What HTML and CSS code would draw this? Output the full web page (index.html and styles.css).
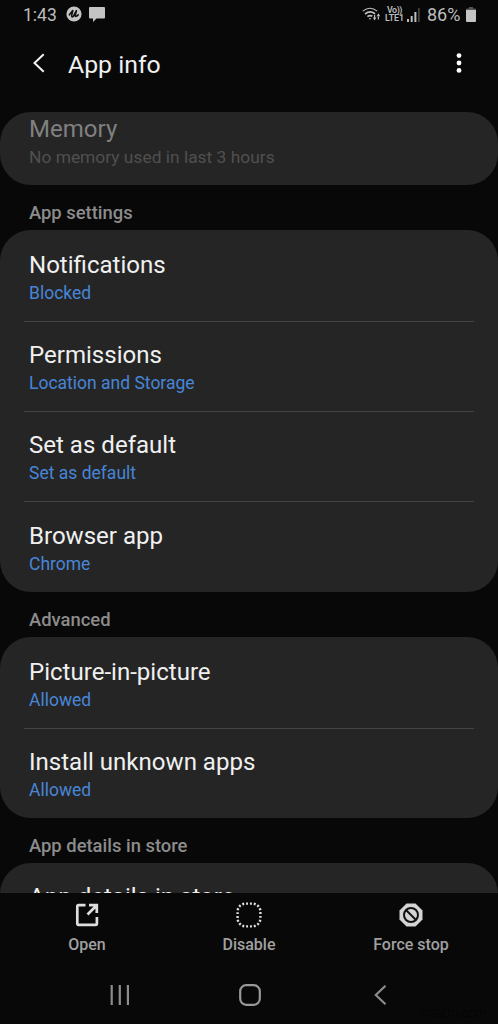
FILE: index.html
```html
<!DOCTYPE html>
<html lang="en">
<head>
<meta charset="utf-8">
<title>App info</title>
<link rel="stylesheet" href="styles.css">
</head>
<body>
<div class="screen">
  <header class="status">
    <span class="time">1:43</span>
    <svg class="badge-icon" width="16" height="16" viewBox="0 0 16 16"><circle cx="8" cy="8" r="7.6" fill="#c4c4c4"/><path d="M3.400 8.800 6.800 4.600 5.600 9.600q0 2 1.700.8L10.400 4.600 9.200 9.600q0 1.900 3-.8" fill="none" stroke="#111" stroke-width="1.600" stroke-linecap="round" stroke-linejoin="round"/></svg>
    <svg class="chat-icon" width="16" height="15" viewBox="0 0 16 15"><path d="M1 0h14q1 0 1 1v9.500q0 1-1 1H7.500L4 15v-3.500H1q-1 0-1-1V1q0-1 1-1z" fill="#c4c4c4"/></svg>
    <span class="spacer"></span>
    <svg class="wifi" width="19" height="14" viewBox="0 0 19 14" fill="none" stroke="#bdbdbd"><path d="M.8 4.200Q8-1.800 15.200 4.200" stroke-width="1.100"/><path d="M3 7Q8 3 13 6.800M5.400 9.600Q8 7.600 10.400 9.300" stroke-width="1.700"/><path d="M6.800 11.400 8 12.700l1.200-1.300q-1.200-.7-2.400 0z" fill="#bdbdbd" stroke="none"/><path d="M10.800 10.500h3.600L12.600 13.500zM14.600 9.300h3.600L16.400 6.300zM12 7.800h1.200V11H12zM15.800 9h1.200v3.500h-1.200z" fill="#bdbdbd" stroke="none"/></svg>
    <span class="lte"><span class="volte">Vo))</span><span>LTE1</span></span>
    <svg class="signal" width="13" height="14" viewBox="0 0 13 14"><path d="M0 11h2v3H0zM3.700 8h2v6h-2zM7.400 4h2v10h-2z" fill="#bdbdbd"/><path d="M11 0h1.700v14H11z" fill="#444"/></svg>
    <span class="percent">86%</span>
    <svg class="battery" width="10" height="15" viewBox="0 0 10 15"><path d="M3 0h4v1.500h2.200q.8 0 .8.8V4H0V2.300q0-.8.8-.8H3z" fill="#555"/><path d="M0 3h10v11q0 1-1 1H1q-1 0-1-1z" fill="#c4c4c4"/></svg>
  </header>
  <div class="titlebar">
    <svg class="back" width="12" height="20" viewBox="0 0 12 20"><path d="M10.700 1.300 1.500 10l9.200 8.700" fill="none" stroke="#f2f2f2" stroke-width="2"/></svg>
    <h1 class="heading">App info</h1>
    <svg class="more" width="6" height="20" viewBox="0 0 6 20" fill="#fff"><circle cx="3" cy="2.600" r="2.400"/><circle cx="3" cy="10" r="2.400"/><circle cx="3" cy="17.400" r="2.400"/></svg>
  </div>
  <main class="content">
    <section class="card memory"><div class="title">Memory</div><div class="sub">No memory used in last 3 hours</div></section>
    <h2 class="label">App settings</h2>
    <section class="card">
      <div class="row"><div class="title">Notifications</div><div class="sub">Blocked</div></div>
      <div class="row"><div class="title">Permissions</div><div class="sub">Location and Storage</div></div>
      <div class="row"><div class="title">Set as default</div><div class="sub">Set as default</div></div>
      <div class="row"><div class="title">Browser app</div><div class="sub">Chrome</div></div>
    </section>
    <h2 class="label">Advanced</h2>
    <section class="card">
      <div class="row"><div class="title">Picture-in-picture</div><div class="sub">Allowed</div></div>
      <div class="row"><div class="title">Install unknown apps</div><div class="sub">Allowed</div></div>
    </section>
    <h2 class="label">App details in store</h2>
    <section class="card">
      <div class="row row-store"><div class="title">App details in store</div></div>
    </section>
  </main>
  <div class="actions">
    <div class="action">
      <svg width="26" height="26" viewBox="0 0 26 26" fill="none" stroke="#dedede" stroke-width="2.700"><path d="M11.500 3.200H4.500q-1.200 0-1.200 1.200v17.200q0 1.200 1.200 1.200h17.200q1.200 0 1.200-1.200v-6.500M13.500 12.500 22 4M15 3.200h7.800V11"/></svg>
      <span>Open</span>
    </div>
    <div class="action">
      <svg width="26" height="26" viewBox="0 0 26 26"><rect x="1.600" y="1.600" width="22.800" height="22.800" rx="8" fill="none" stroke="#dedede" stroke-width="2.400" pathLength="80" stroke-dasharray="2 2" stroke-dashoffset="-.5"/></svg>
      <span>Disable</span>
    </div>
    <div class="action">
      <svg width="26" height="26" viewBox="0 0 26 26"><path d="M8.500 1.500h9l7 7v9l-7 7h-9l-7-7v-9z" fill="#d4d4d4"/><g fill="none" stroke="#111" stroke-width="2"><circle cx="13" cy="13" r="7"/><path d="m8 8 10 10"/></g></svg>
      <span>Force stop</span>
    </div>
  </div>
  <nav class="nav">
    <svg width="20" height="22" viewBox="0 0 20 22"><path d="M1.700 1v20M9.800 1v20M17.900 1v20" stroke="#8c8c8c" stroke-width="2.200"/></svg>
    <svg class="home" width="22" height="22" viewBox="0 0 22 22"><rect x="1.200" y="1.200" width="19.600" height="19.600" rx="6" fill="none" stroke="#999" stroke-width="2.200"/></svg>
    <svg width="13" height="22" viewBox="0 0 13 22"><path d="M11.500 1.700 1.800 11l9.700 9.300" fill="none" stroke="#8c8c8c" stroke-width="2.200"/></svg>
  </nav>
  <span class="watermark">wsxdn.com</span>
</div>
</body>
</html>
```
FILE: styles.css
```css
* { box-sizing: border-box; }
body { margin: 0; background: #080808; font-family: Roboto, "Liberation Sans", sans-serif; }
svg { display: block; flex: none; }
h1, h2 { margin: 0; font-weight: 400; }
.screen { position: relative; width: 498px; height: 1024px; overflow: hidden; display: flex; flex-direction: column; background: #080808; color: #f0f0f0; }
.status { display: flex; align-items: center; height: 29px; padding: 0 22px 0 23px; color: #bdbdbd; flex: none; }
.time { font-size: 17.500px; width: 43px; white-space: nowrap; }
.badge-icon { margin-top: -1px; }
.chat-icon { margin-left: 7px; }
.spacer { flex: 1; }
.wifi { margin: -2px 4px 0 0; }
.lte { display: flex; flex-direction: column; align-items: center; width: 19px; margin: -1px 3px 0 0; font-size: 8.800px; line-height: 8px; font-weight: 600; }
.volte { letter-spacing: -.4px; }
.signal { margin-right: 7px; }
.percent { font-size: 18px; width: 39px; }
.titlebar { display: flex; align-items: center; height: 69px; padding: 0 36px 0 33px; flex: none; }
.back { margin-top: -1px; }
.heading { flex: 1; margin: 2px 0 0 23px; font-size: 24.800px; line-height: 30px; }
.more { margin-top: -1px; }
.content { flex: none; height: 795px; padding-top: 13.500px; overflow: hidden; }
.card { border-radius: 31px; background: #252525; }
.memory { height: 73.200px; padding: 2.600px 29px 0; }
.memory .title { color: #808080; }
.memory .sub { color: #505050; font-size: 17.400px; }
.row { position: relative; height: 90.330px; padding: 19.400px 24px 0 29px; }
.row + .row::before { content: ""; position: absolute; top: 0; left: 24px; right: 24px; height: 1px; background: #444; }
.row-store { padding-top: 18.300px; }
.title { font-size: 24.050px; line-height: 30px; white-space: nowrap; }
.sub { font-size: 17.500px; line-height: 26px; color: #4885d8; }
.label { height: 45.600px; padding: 2px 29px 0; font-size: 18.400px; line-height: 52px; font-weight: 500; color: #8c8c8c; }
.actions { display: flex; flex: none; height: 74px; padding: 9px 6px 0; }
.action { flex: 1; display: flex; flex-direction: column; align-items: center; gap: 7px; font-size: 16px; line-height: 20px; font-weight: 500; color: #a0a0a0; }
.nav { display: flex; align-items: center; justify-content: space-between; height: 56px; padding: 0 111px 0 110px; }
.home { margin-right: 4px; }
.watermark { position: absolute; right: 12px; bottom: 3px; font: 13px/16px "Liberation Sans", Arial, sans-serif; color: #000; text-shadow: 0 0 1px #191919; }
```
